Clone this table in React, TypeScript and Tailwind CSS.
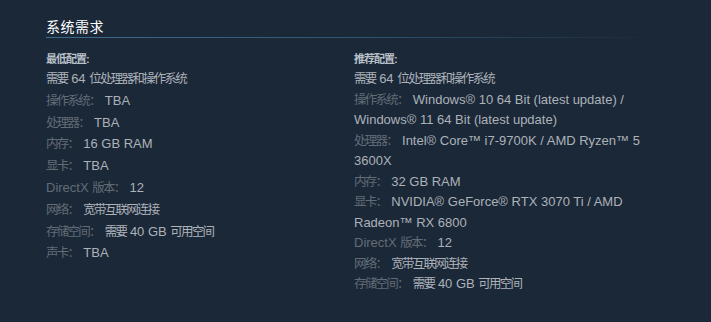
import React from 'react';

type Row = { label?: string; value: string };

const minimum: Row[] = [
  { value: '需要 64 位处理器和操作系统' },
  { label: '操作系统：', value: 'TBA' },
  { label: '处理器：', value: 'TBA' },
  { label: '内存：', value: '16 GB RAM' },
  { label: '显卡：', value: 'TBA' },
  { label: 'DirectX 版本：', value: '12' },
  { label: '网络：', value: '宽带互联网连接' },
  { label: '存储空间：', value: '需要 40 GB 可用空间' },
  { label: '声卡：', value: 'TBA' },
];

const recommended: Row[] = [
  { value: '需要 64 位处理器和操作系统' },
  { label: '操作系统：', value: 'Windows® 10 64 Bit (latest update) / Windows® 11 64 Bit (latest update)' },
  { label: '处理器：', value: 'Intel® Core™ i7-9700K / AMD Ryzen™ 5 3600X' },
  { label: '内存：', value: '32 GB RAM' },
  { label: '显卡：', value: 'NVIDIA® GeForce® RTX 3070 Ti / AMD Radeon™ RX 6800' },
  { label: 'DirectX 版本：', value: '12' },
  { label: '网络：', value: '宽带互联网连接' },
  { label: '存储空间：', value: '需要 40 GB 可用空间' },
];

const isCjk = (s: string) => /[\u3000-\u9fff\uff00-\uffef]/.test(s);

// the CJK glyphs in the shot are narrower than a full em, so squeeze those runs a bit
const Mixed = ({ text }: { text: string }) => (
  <>
    {text
      .split(/([\u3000-\u9fff\uff00-\uffef]+)/)
      .filter((part) => part !== '')
      .map((part, i) =>
        isCjk(part) ? (
          <span key={i} className="text-[12.5px] tracking-[-1.75px]">
            {part}
          </span>
        ) : (
          <React.Fragment key={i}>{part}</React.Fragment>
        )
      )}
  </>
);

const Column = ({ title, rows, loose }: { title: string; rows: Row[]; loose?: boolean }) => (
  <div className="w-[308px] pr-4">
    {/* column heading */}
    <div className="text-[11px] leading-[14px] font-bold tracking-[-1px] text-[#b9c1c8]">{title}:</div>
    <ul className="mt-[3px]">
      {rows.map((r, i) => (
        <li
          key={i}
          className={
            loose
              ? 'text-[13px] leading-[20.5px] mb-[1.3px] text-[#acb2b8]'
              : 'text-[13px] leading-[20.5px] text-[#acb2b8]'
          }
        >
          {r.label && (
            <span className="text-[#626c76] mr-[5px]">
              <Mixed text={r.label} />
            </span>
          )}
          <Mixed text={r.value} />
        </li>
      ))}
    </ul>
  </div>
);

export default function App() {
  return (
    <div
      className="w-full h-[322px] bg-[#1b2838] pt-[17px] pl-[46px]"
      style={{ fontFamily: '"Liberation Sans", "Noto Sans CJK SC", sans-serif' }}
    >
      {/* section title */}
      <div className="w-[616px]">
        <h2 className="text-[14px] leading-[20px] tracking-[0.5px] text-white">系统需求</h2>
        <div className="h-px bg-gradient-to-r from-[#3d6c8b] via-[#2f5672] to-transparent" />
      </div>

      <div className="flex mt-[14px]">
        <Column title="最低配置" rows={minimum} loose />
        <Column title="推荐配置" rows={recommended} />
      </div>
    </div>
  );
}
